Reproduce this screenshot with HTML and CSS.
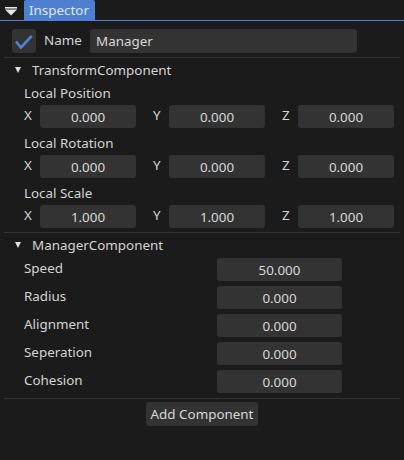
FILE: index.html
```html
<!DOCTYPE html>
<html>
<head>
<meta charset="utf-8">
<link rel="stylesheet" href="styles.css">
</head>
<body>
<div class="tabbar">
  <div class="menu-btn">
    <svg width="12" height="9" viewBox="0 0 12 9"><rect x="0" y="0" width="12" height="1.6" fill="#e6e6e6"/><polygon points="0,2.6 12,2.6 6,8.6" fill="#e6e6e6"/></svg>
  </div>
  <div class="tab">Inspector</div>
</div>
<div class="window">
  <div class="name-row">
    <div class="checkbox">
      <svg width="24" height="24" viewBox="0 0 24 24"><polyline points="4,12.5 9,18.5 19.8,6.8" fill="none" stroke="#4f82d6" stroke-width="2.6"/></svg>
    </div>
    <span class="name-label">Name</span>
    <div class="field field-left name-field">Manager</div>
  </div>
  <div class="sep"></div>

  <div class="header"><span class="arrow"></span>TransformComponent</div>
  <div class="sub-label">Local Position</div>
  <div class="vec-row">
    <span class="axis">X</span><div class="field">0.000</div>
    <span class="axis">Y</span><div class="field">0.000</div>
    <span class="axis">Z</span><div class="field">0.000</div>
  </div>
  <div class="sub-label spaced">Local Rotation</div>
  <div class="vec-row">
    <span class="axis">X</span><div class="field">0.000</div>
    <span class="axis">Y</span><div class="field">0.000</div>
    <span class="axis">Z</span><div class="field">0.000</div>
  </div>
  <div class="sub-label spaced">Local Scale</div>
  <div class="vec-row">
    <span class="axis">X</span><div class="field">1.000</div>
    <span class="axis">Y</span><div class="field">1.000</div>
    <span class="axis">Z</span><div class="field">1.000</div>
  </div>
  <div class="sep"></div>

  <div class="header"><span class="arrow"></span>ManagerComponent</div>
  <div class="props">
    <div class="prop-row"><span class="prop-label">Speed</span><div class="field prop-field">50.000</div></div>
    <div class="prop-row"><span class="prop-label">Radius</span><div class="field prop-field">0.000</div></div>
    <div class="prop-row"><span class="prop-label">Alignment</span><div class="field prop-field">0.000</div></div>
    <div class="prop-row"><span class="prop-label">Seperation</span><div class="field prop-field">0.000</div></div>
    <div class="prop-row"><span class="prop-label">Cohesion</span><div class="field prop-field">0.000</div></div>
  </div>
  <div class="sep"></div>
  <div class="button-row"><div class="button">Add Component</div></div>
</div>
</body>
</html>
```
FILE: styles.css
```css
html, body {
  margin: 0;
  padding: 0;
  background: #1b1b1b;
  width: 404px;
  height: 460px;
  overflow: hidden;
}
body {
  font-family: "Noto Sans", "Open Sans", sans-serif;
  font-size: 13.4px;
  color: #d4d4d4;
}
.tabbar {
  display: flex;
  height: 20px;
  border-bottom: 1px solid #4f7fd0;
}
.menu-btn {
  width: 24px;
  padding-left: 5px;
  padding-top: 7px;
  box-sizing: border-box;
}
.menu-btn svg { display: block; }
.tab {
  width: 71px;
  background: #4f7fd0;
  color: #dfe7f6;
  box-sizing: border-box;
  padding-left: 5px;
  line-height: 20px;
  border-radius: 2px 2px 0 0;
}
.window {
  padding-top: 8px;
}
.name-row {
  display: flex;
  align-items: center;
  height: 24px;
  margin-left: 12px;
}
.checkbox {
  width: 24px;
  height: 24px;
  background: #333333;
  border-radius: 3px;
}
.checkbox svg { display: block; }
.name-label {
  margin-left: 8px;
  width: 46px;
  line-height: 21px;
  align-self: flex-start;
  padding-top: 1px;
}
.field {
  background: #333333;
  border-radius: 3px;
  height: 23px;
  box-sizing: border-box;
  line-height: 21px;
  padding-top: 2px;
  text-align: center;
  color: #d8d8d8;
}
.field-left {
  text-align: left;
  padding-left: 6px;
}
.name-field {
  width: 267px;
  height: 24px;
}
.sep {
  height: 1px;
  background: #333333;
  margin: 4px 4px 0 4px;
}
.header {
  display: flex;
  align-items: center;
  height: 23px;
  line-height: 23px;
  margin-top: 1px;
  padding-left: 15px;
}
.arrow {
  width: 0;
  height: 0;
  border-left: 3.5px solid transparent;
  border-right: 3.5px solid transparent;
  border-top: 6px solid #e0e0e0;
  margin-right: 11px;
  margin-top: -1px;
}
.sub-label {
  height: 23px;
  line-height: 23px;
  padding-left: 24px;
}
.sub-label.spaced {
  margin-top: 4px;
}
.vec-row {
  display: grid;
  grid-template-columns: 16px 96px 33px 96px 33px 96px;
  padding-left: 24px;
  height: 23px;
}
.vec-row .axis {
  line-height: 21px;
}
.vec-row .axis:nth-child(3),
.vec-row .axis:nth-child(5) {
  padding-left: 17px;
}
.props {
  display: flex;
  flex-direction: column;
  gap: 5px;
  margin-top: 1px;
}
.prop-row {
  display: flex;
  height: 23px;
  padding-left: 24px;
}
.prop-label {
  width: 193px;
  line-height: 21px;
}
.prop-field {
  width: 125px;
}
.props + .sep {
  margin-top: 5px;
}
.button-row {
  display: flex;
  justify-content: center;
  margin-top: 3px;
}
.button {
  background: #333333;
  border-radius: 3px;
  height: 24px;
  line-height: 24px;
  padding: 0 5px;
  box-sizing: border-box;
  color: #d8d8d8;
}
```
